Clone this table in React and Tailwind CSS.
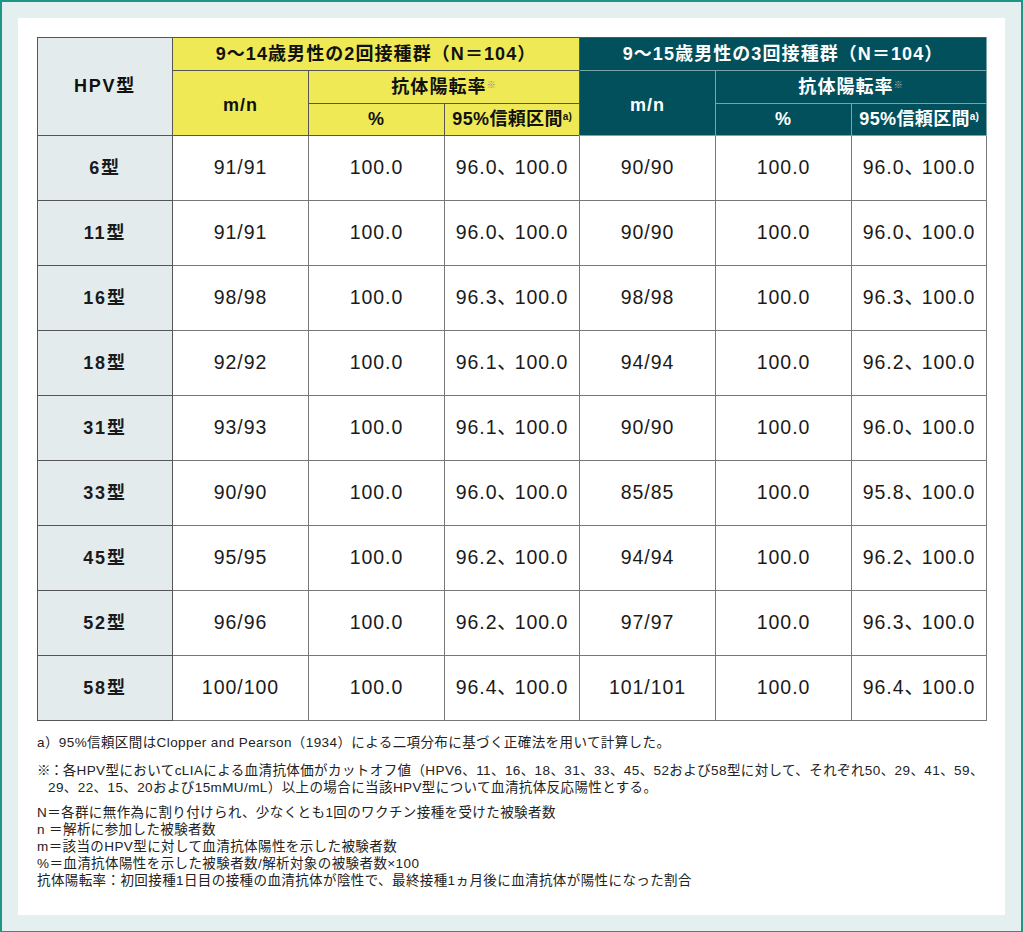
const ROWS = [
  ['6型', '91/91', '100.0', '96.0、100.0', '90/90', '100.0', '96.0、100.0'],
  ['11型', '91/91', '100.0', '96.0、100.0', '90/90', '100.0', '96.0、100.0'],
  ['16型', '98/98', '100.0', '96.3、100.0', '98/98', '100.0', '96.3、100.0'],
  ['18型', '92/92', '100.0', '96.1、100.0', '94/94', '100.0', '96.2、100.0'],
  ['31型', '93/93', '100.0', '96.1、100.0', '90/90', '100.0', '96.0、100.0'],
  ['33型', '90/90', '100.0', '96.0、100.0', '85/85', '100.0', '95.8、100.0'],
  ['45型', '95/95', '100.0', '96.2、100.0', '94/94', '100.0', '96.2、100.0'],
  ['52型', '96/96', '100.0', '96.2、100.0', '97/97', '100.0', '96.3、100.0'],
  ['58型', '100/100', '100.0', '96.4、100.0', '101/101', '100.0', '96.4、100.0'],
]

const font = { fontFamily: '"Liberation Sans", "Noto Sans CJK JP", sans-serif' }

const yel = 'bg-[#efe956] text-[#111] border border-[#555]'
const teal = 'bg-[#02505c] text-white border border-[#7aa3aa]'

export default function App() {
  return (
    <div
      className="min-h-[932px] w-[1023px] border-2 border-[#1d9686] bg-[#e4f0f0] p-4"
      style={font}
    >
      <div className="bg-white px-[19px] pb-[26px] pt-[19px]">
        <table className="w-[949px] table-fixed border-collapse text-center">
          <colgroup>
            <col className="w-[135px]" />
            <col className="w-[136px]" />
            <col className="w-[136px]" />
            <col className="w-[135px]" />
            <col className="w-[136px]" />
            <col className="w-[136px]" />
            <col className="w-[135px]" />
          </colgroup>
          <thead className="text-[18px] font-bold tracking-[0.06em]">
            <tr className="h-[33px]">
              <th rowSpan={3} className="border border-[#555] bg-[#e3ebed] tracking-[0.1em] text-[#111]">
                HPV型
              </th>
              <th colSpan={3} className={yel + ' whitespace-nowrap'}>
                9～14歳男性の2回接種群（N＝104）
              </th>
              <th colSpan={3} className={teal + ' whitespace-nowrap border-t-[#555] border-l-[#555]'}>
                9～15歳男性の3回接種群（N＝104）
              </th>
            </tr>
            <tr className="h-[33px]">
              <th rowSpan={2} className={yel + ' pt-1'}>m/n</th>
              <th colSpan={2} className={yel}>
                抗体陽転率<sup className="text-[9px] font-normal text-[#888]">※</sup>
              </th>
              <th rowSpan={2} className={teal + ' border-l-[#555] pt-1'}>m/n</th>
              <th colSpan={2} className={teal}>
                抗体陽転率<sup className="text-[9px] font-normal text-[#bbb]">※</sup>
              </th>
            </tr>
            <tr className="h-[32px]">
              <th className={yel + ' font-semibold'}>%</th>
              <th className={yel + ' whitespace-nowrap tracking-[0.02em]'}>
                95%信頼区間<sup className="text-[10px] tracking-normal">a)</sup>
              </th>
              <th className={teal + ' font-semibold'}>%</th>
              <th className={teal + ' whitespace-nowrap tracking-[0.02em]'}>
                95%信頼区間<sup className="text-[10px] tracking-normal">a)</sup>
              </th>
            </tr>
          </thead>
          <tbody className="text-[19.5px] tracking-[0.05em] text-[#1a1a1a] [font-feature-settings:'palt']">
            {ROWS.map((r) => (
              <tr key={r[0]} className="h-[65px]">
                <td className="border border-[#555] bg-[#e3ebed] text-[18px] font-bold tracking-[0.1em]">
                  {r[0]}
                </td>
                {r.slice(1).map((c, i) => (
                  <td key={i} className="whitespace-nowrap border border-[#777]">
                    {c.replace('、', '、 ')}
                  </td>
                ))}
              </tr>
            ))}
          </tbody>
        </table>

        <div className="mt-[13px] text-[13.5px] leading-[17px] tracking-[0.03em] text-[#222]">
          <p>a）95%信頼区間はClopper and Pearson（1934）による二項分布に基づく正確法を用いて計算した。</p>
          <div className="mt-[11px]">
            <p className="whitespace-nowrap">
              <span className="tracking-[-0.05em]">※：</span>各HPV型においてcLIAによる血清抗体価がカットオフ値（HPV6、11、16、18、31、33、45、52および58型に対して、それぞれ50、29、41、59、
            </p>
            <p className="whitespace-nowrap pl-[11px]">
              29、22、15、20および15mMU/mL）以上の場合に当該HPV型について血清抗体反応陽性とする。
            </p>
          </div>
          <div className="mt-[8px]">
            <p>N＝各群に無作為に割り付けられ、少なくとも1回のワクチン接種を受けた被験者数</p>
            <p>n ＝解析に参加した被験者数</p>
            <p>m＝該当のHPV型に対して血清抗体陽性を示した被験者数</p>
            <p>%＝血清抗体陽性を示した被験者数/解析対象の被験者数×100</p>
            <p>抗体陽転率：初回接種1日目の接種の血清抗体が陰性で、最終接種1ヵ月後に血清抗体が陽性になった割合</p>
          </div>
        </div>
      </div>
    </div>
  )
}
